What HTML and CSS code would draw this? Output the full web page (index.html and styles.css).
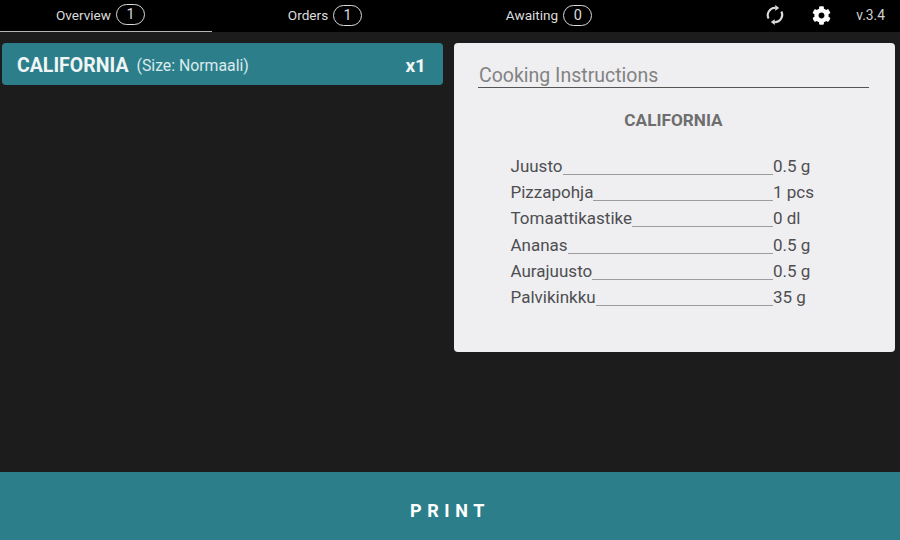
FILE: index.html
```html
<!DOCTYPE html>
<html lang="en">
<head>
<meta charset="utf-8">
<title>Kitchen</title>
<link rel="stylesheet" href="styles.css">
</head>
<body>
<div class="app">
  <header class="topbar">
    <nav class="tabs">
      <div class="tab tab-overview active"><span>Overview</span><span class="pill">1</span></div>
      <div class="tab tab-orders"><span>Orders</span><span class="pill">1</span></div>
      <div class="tab tab-awaiting"><span>Awaiting</span><span class="pill">0</span></div>
    </nav>
    <div class="tools">
      <svg class="icon-sync" viewBox="0 0 20 20" aria-hidden="true">
        <path class="arc" d="M3.6 13.6A7.4 7.4 0 0 1 10.5 2.8"/>
        <path class="arc" d="M16.4 6.4A7.4 7.4 0 0 1 9.5 17.2"/>
        <path class="head" d="M10.2 0L14.2 2.9L10.2 5.8Z"/>
        <path class="head" d="M9.8 20L5.8 17.1L9.8 14.2Z"/>
      </svg>
      <svg class="icon-gear" viewBox="0 0 512 512" aria-hidden="true">
        <path d="M487.4 315.7l-42.6-24.6c4.3-23.2 4.3-47 0-70.2l42.6-24.6c4.9-2.8 7.1-8.6 5.5-14-11.1-35.6-30-67.8-54.7-94.6-3.8-4.1-10-5.1-14.8-2.3L380.8 110c-17.9-15.4-38.5-27.3-60.8-35.1V25.8c0-5.6-3.9-10.5-9.4-11.7-36.7-8.2-74.3-7.8-109.2 0-5.5 1.2-9.4 6.1-9.4 11.7V75c-22.2 7.9-42.8 19.8-60.8 35.1L88.7 85.5c-4.9-2.8-11-1.9-14.8 2.3-24.7 26.7-43.6 58.9-54.7 94.6-1.7 5.4.6 11.2 5.5 14L67.3 221c-4.3 23.2-4.3 47 0 70.2l-42.6 24.6c-4.9 2.8-7.1 8.6-5.5 14 11.1 35.6 30 67.8 54.7 94.6 3.8 4.1 10 5.1 14.8 2.3l42.6-24.6c17.9 15.4 38.5 27.3 60.8 35.1v49.2c0 5.6 3.9 10.5 9.4 11.7 36.7 8.2 74.3 7.8 109.2 0 5.5-1.2 9.4-6.1 9.4-11.7v-49.2c22.2-7.9 42.8-19.8 60.8-35.1l42.6 24.6c4.9 2.8 11 1.9 14.8-2.3 24.7-26.7 43.6-58.9 54.7-94.6 1.5-5.5-.7-11.3-5.6-14.1zM256 336c-44.1 0-80-35.9-80-80s35.9-80 80-80 80 35.9 80 80-35.9 80-80 80z"/>
      </svg>
      <span class="version">v.3.4</span>
    </div>
  </header>

  <main class="content">
    <section class="orders">
      <div class="order">
        <span class="order-name">CALIFORNIA</span>
        <span class="order-size">(Size: Normaali)</span>
        <span class="order-qty">x1</span>
      </div>
    </section>
    <section class="card">
      <h2 class="card-title">Cooking Instructions</h2>
      <h3 class="recipe-name">CALIFORNIA</h3>
      <ul class="ingredients">
        <li class="row"><span>Juusto</span><i class="line"></i><span class="amount">0.5 g</span></li>
        <li class="row"><span>Pizzapohja</span><i class="line"></i><span class="amount">1 pcs</span></li>
        <li class="row"><span>Tomaattikastike</span><i class="line"></i><span class="amount">0 dl</span></li>
        <li class="row"><span>Ananas</span><i class="line"></i><span class="amount">0.5 g</span></li>
        <li class="row"><span>Aurajuusto</span><i class="line"></i><span class="amount">0.5 g</span></li>
        <li class="row"><span>Palvikinkku</span><i class="line"></i><span class="amount">35 g</span></li>
      </ul>
    </section>
  </main>

  <footer class="print">PRINT</footer>
</div>
</body>
</html>
```
FILE: styles.css
```css
* { box-sizing: border-box; }
html, body { margin: 0; padding: 0; }
body {
  width: 900px;
  height: 540px;
  overflow: hidden;
  font-family: Roboto, "Liberation Sans", sans-serif;
  background: #1c1c1c;
}
.app { display: flex; flex-direction: column; height: 540px; }

.topbar {
  height: 32px;
  background: #000;
  display: flex;
  color: #dcdcdc;
  font-size: 13.6px;
}
.tabs { display: grid; grid-template-columns: 212px 226px 222px; }
.tab {
  display: flex;
  align-items: center;
  justify-content: center;
  gap: 5px;
  height: 32px;
  padding-bottom: 2px;
}
.tab-overview { padding-right: 11px; }
.tab.active { border-bottom: 1px solid #b4b4b4; }
.pill {
  width: 29px;
  height: 21px;
  border: 1px solid #dcdcdc;
  border-radius: 11px;
  display: flex;
  align-items: center;
  justify-content: center;
  font-size: 14.5px;
}
.tools {
  flex: 1;
  display: flex;
  align-items: center;
  padding: 0 15px 2px 105px;
}
.icon-sync { width: 20px; height: 20px; }
.icon-sync .arc { fill: none; stroke: #dcdcdc; stroke-width: 2.1; }
.icon-sync .head { fill: #dcdcdc; }
.icon-gear { width: 19px; height: 19px; margin-left: 27px; fill: #fff; }
.version { margin-left: auto; font-size: 13.8px; color: #d0d0d0; }

.content {
  flex: 1;
  display: flex;
  padding: 11px 5px 0 2px;
  gap: 11px;
  align-items: flex-start;
}
.orders { width: 441px; }
.order {
  height: 42px;
  background: #2c7f8a;
  border-radius: 4px;
  display: flex;
  align-items: center;
  padding: 2px 17px 0 15px;
  color: #fff;
}
.order-name { font-size: 19.5px; font-weight: 700; color: #f0f5f5; }
.order-size { font-size: 15.8px; margin-left: 8px; color: #dcebed; }
.order-qty { margin-left: auto; font-size: 19px; font-weight: 700; color: #f0f5f5; }

.card {
  width: 441px;
  height: 309px;
  background: #efeff1;
  border-radius: 4px;
  padding: 19px 26px 0 24px;
}
.card-title {
  margin: 0;
  height: 26px;
  font-size: 19.5px;
  line-height: 28px;
  font-weight: 400;
  color: #828282;
  border-bottom: 1px solid #555;
  padding-left: 1px;
}
.recipe-name {
  margin: 21px 0 0;
  text-align: center;
  font-size: 17.2px;
  line-height: 22px;
  font-weight: 700;
  color: #6e6e6e;
}
.ingredients {
  list-style: none;
  margin: 21.6px 0 0;
  padding: 0 0 0 32.5px;
  font-size: 17px;
  color: #4e4e52;
}
.row { display: flex; height: 26.35px; align-items: center; }
.line {
  flex-grow: 1;
  height: 1px;
  background: #9c9c9c;
  align-self: flex-start;
  margin-top: 21px;
}
.amount { width: 96px; flex: none; }

.print {
  height: 68px;
  background: #2c7f8a;
  display: flex;
  align-items: center;
  justify-content: center;
  padding-top: 8px;
  color: #fff;
  font-size: 18px;
  font-weight: 700;
  letter-spacing: 5.6px;
}
```
